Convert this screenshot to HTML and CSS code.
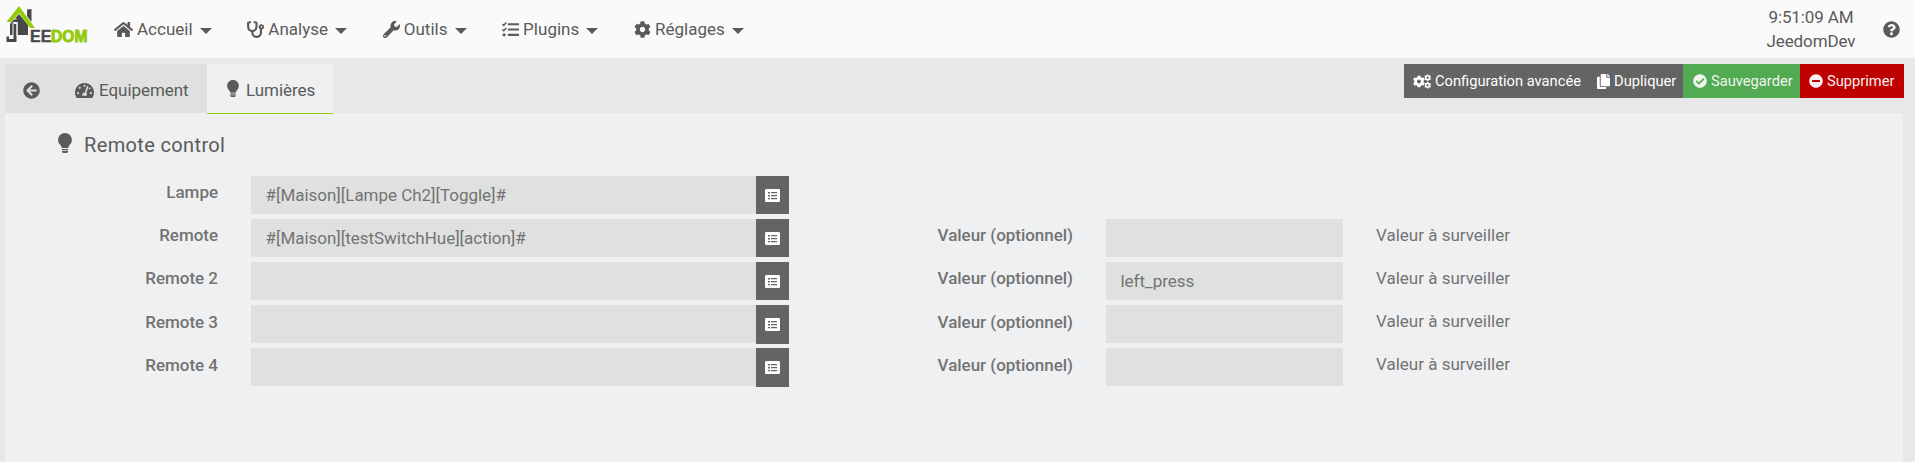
FILE: index.html
```html
<!DOCTYPE html>
<html lang="fr">
<head>
<meta charset="utf-8">
<title>Jeedom - Remote control</title>
<link rel="stylesheet" href="styles.css">
</head>
<body>
<svg class="sprite" aria-hidden="true">
  <symbol id="home" viewBox="0 0 576 512"><path d="M280.37 148.26L96 300.11V464a16 16 0 0 0 16 16l112.06-.29a16 16 0 0 0 15.92-16V368a16 16 0 0 1 16-16h64a16 16 0 0 1 16 16v95.64a16 16 0 0 0 16 16.05L464 480a16 16 0 0 0 16-16V300L295.67 148.26a12.19 12.19 0 0 0-15.3 0zM571.6 251.47L488 182.56V44.05a12 12 0 0 0-12-12h-56a12 12 0 0 0-12 12v72.61L318.47 43a48 48 0 0 0-61 0L4.34 251.47a12 12 0 0 0-1.6 16.9l25.5 31A12 12 0 0 0 45.15 301l235.22-193.74a12.19 12.19 0 0 1 15.3 0L530.9 301a12 12 0 0 0 16.9-1.6l25.5-31a12 12 0 0 0-1.7-16.93z"/></symbol>
  <symbol id="stethoscope" viewBox="0 0 512 512"><g fill="none" stroke="currentColor" stroke-width="64" stroke-linecap="round" stroke-linejoin="round"><path d="M94 36L34 50V176a126 126 0 0 0 252 0V50L226 36"/><path d="M160 304V350a130 130 0 0 0 260 0V200"/></g><circle cx="432" cy="176" r="80"/><circle cx="432" cy="176" r="24" fill="#fafafa"/></symbol>
  <symbol id="wrench" viewBox="0 0 512 512"><path d="M507.73 109.1c-2.24-9.03-13.54-12.09-20.12-5.51l-74.36 74.36-67.88-11.31-11.31-67.88 74.36-74.36c6.62-6.62 3.43-17.9-5.66-20.16-47.38-11.74-99.55.91-136.58 37.93-39.64 39.64-50.55 97.1-34.05 147.2L18.74 402.76c-24.99 24.99-24.99 65.51 0 90.5 24.99 24.99 65.51 24.99 90.5 0l213.21-213.21c50.12 16.71 107.47 5.68 147.37-34.22 37.07-37.07 49.7-89.32 37.91-136.73zM64 472c-13.25 0-24-10.75-24-24 0-13.26 10.75-24 24-24s24 10.74 24 24c0 13.25-10.75 24-24 24z"/></symbol>
  <symbol id="tasks" viewBox="0 0 512 512"><path d="M10 92L52 132L128 48M10 252L52 292L128 208" fill="none" stroke="currentColor" stroke-width="44"/><circle cx="62" cy="416" r="48"/><rect x="176" y="64" width="336" height="64" rx="16"/><rect x="176" y="224" width="336" height="64" rx="16"/><rect x="176" y="384" width="336" height="64" rx="16"/></symbol>
  <symbol id="cog" viewBox="0 0 512 512"><path d="M487.4 315.7l-42.600-24.600c4.300-23.200 4.300-47 0-70.200l42.600-24.600c4.900-2.800 7.100-8.600 5.500-14-11.100-35.600-30-67.800-54.700-94.600-3.800-4.100-10-5.100-14.800-2.300L380.800 110c-17.900-15.400-38.500-27.300-60.800-35.100V25.800c0-5.600-3.900-10.500-9.400-11.700-36.700-8.200-74.300-7.800-109.200 0-5.500 1.200-9.400 6.100-9.400 11.700V75c-22.200 7.900-42.800 19.800-60.800 35.100L88.700 85.500c-4.900-2.800-11-1.900-14.800 2.300-24.700 26.700-43.600 58.900-54.700 94.600-1.700 5.400.6 11.200 5.500 14L67.300 221c-4.300 23.200-4.300 47 0 70.200l-42.600 24.600c-4.900 2.800-7.100 8.600-5.500 14 11.100 35.600 30 67.800 54.700 94.600 3.800 4.100 10 5.100 14.800 2.300l42.600-24.600c17.900 15.400 38.500 27.300 60.800 35.100v49.200c0 5.600 3.900 10.500 9.400 11.700 36.700 8.200 74.300 7.800 109.200 0 5.500-1.200 9.400-6.100 9.400-11.700v-49.200c22.200-7.900 42.800-19.800 60.800-35.100l42.600 24.600c4.900 2.800 11 1.900 14.800-2.300 24.700-26.700 43.600-58.900 54.700-94.600 1.500-5.500-.7-11.300-5.600-14.100zM256 336c-44.100 0-80-35.900-80-80s35.900-80 80-80 80 35.900 80 80-35.900 80-80 80z"/></symbol>
  <symbol id="cogs" viewBox="0 0 640 512"><use href="#cog" x="-8" y="36" width="440" height="440"/><use href="#cog" x="396" y="-4" width="250" height="250"/><use href="#cog" x="396" y="266" width="250" height="250"/></symbol>
  <symbol id="help" viewBox="0 0 512 512"><path d="M504 256c0 136.997-111.043 248-248 248S8 392.997 8 256C8 119.083 119.043 8 256 8s248 111.083 248 248zM262.655 90c-54.497 0-89.255 22.957-116.549 63.758-3.536 5.286-2.353 12.415 2.715 16.258l34.699 26.310c5.205 3.947 12.621 3.008 16.665-2.122 17.864-22.658 30.113-35.797 57.303-35.797 20.429 0 45.698 13.148 45.698 32.958 0 14.976-12.363 22.667-32.534 33.976C247.128 238.528 216 254.941 216 296v4c0 6.627 5.373 12 12 12h56c6.627 0 12-5.373 12-12v-1.333c0-28.462 83.186-29.647 83.186-106.667 0-58.002-60.165-102-116.531-102zM256 338c-25.365 0-46 20.635-46 46 0 25.364 20.635 46 46 46s46-20.636 46-46c0-25.365-20.635-46-46-46z"/></symbol>
  <symbol id="back" viewBox="0 0 512 512"><path d="M256 504C119 504 8 393 8 256S119 8 256 8s248 111 248 248-111 248-248 248zm28.900-143.600L209.400 288H392c13.300 0 24-10.700 24-24v-16c0-13.300-10.700-24-24-24H209.400l75.500-72.400c9.700-9.300 9.900-24.800.4-34.300l-11-10.900c-9.400-9.400-24.600-9.400-33.900 0L107.700 239c-9.400 9.400-9.400 24.600 0 33.900l132.700 132.700c9.400 9.400 24.600 9.400 33.900 0l11-10.900c9.500-9.500 9.300-25-.4-34.300z"/></symbol>
  <symbol id="gauge" viewBox="0 0 576 512"><path d="M288 32C129 32 0 161 0 320c0 53 14 102 39 145 6 10 16 15 27 15H510c11 0 21-5 27-15 25-43 39-92 39-145C576 161 447 32 288 32z"/><g fill="#dfe1e0"><circle cx="288" cy="112" r="32"/><circle cx="144" cy="176" r="32"/><circle cx="96" cy="336" r="32"/><circle cx="480" cy="336" r="32"/><circle cx="445" cy="190" r="28"/><path d="M358 136a23 23 0 0 1 44 15L343 331a64 64 0 0 1 4 85H229a64 64 0 0 1 68-94z"/></g></symbol>
  <symbol id="bulb" viewBox="0 0 352 512"><path d="M176 0C76 0 0 80 0 176c0 44 16 84 44 115 20 24 40 51 48 77v16H260v-16c8-26 28-53 48-77 28-31 44-71 44-115C352 80 276 0 176 0zM96 408H256v34H96zM96 462H256v18l-28 32H124l-28-32z"/></symbol>
  <symbol id="copy" viewBox="0 0 448 512"><path d="M320 448v40c0 13.255-10.745 24-24 24H24c-13.255 0-24-10.745-24-24V120c0-13.255 10.745-24 24-24h72v296c0 30.879 25.121 56 56 56h168zm0-344V0H152c-13.255 0-24 10.745-24 24v368c0 13.255 10.745 24 24 24h272c13.255 0 24-10.745 24-24V128H344c-13.200 0-24-10.800-24-24zm120.971-31.029L375.029 7.029A24 24 0 0 0 358.059 0H352v96h96v-6.059a24 24 0 0 0-7.029-16.970z"/></symbol>
  <symbol id="check" viewBox="0 0 512 512"><path d="M504 256c0 136.967-111.033 248-248 248S8 392.967 8 256 119.033 8 256 8s248 111.033 248 248zM227.314 387.314l184-184c6.248-6.248 6.248-16.379 0-22.627l-22.627-22.627c-6.248-6.249-16.379-6.249-22.628 0L216 308.118l-70.059-70.059c-6.248-6.248-16.379-6.248-22.628 0l-22.627 22.627c-6.248 6.248-6.248 16.379 0 22.627l104 104c6.249 6.249 16.379 6.249 22.628.001z"/></symbol>
  <symbol id="minus" viewBox="0 0 512 512"><path d="M256 8C119 8 8 119 8 256s111 248 248 248 248-111 248-248S393 8 256 8zM124 296c-6.600 0-12-5.400-12-12v-56c0-6.600 5.400-12 12-12h264c6.600 0 12 5.400 12 12v56c0 6.600-5.400 12-12 12H124z"/></symbol>
  <symbol id="list" viewBox="0 0 15 13"><rect width="15" height="13" rx="1.300"/><g fill="#646464"><path d="M3 3h2v1.500H3zM3 6h2v1.500H3zM3 9h2v1.300H3zM6 3h6v1.300H6zM6 6h6v1.300H6zM6 9h6v1.300H6z"/></g></symbol>
</svg>

<header class="navbar">
  <svg class="logo" viewBox="0 0 86 40" role="img" aria-label="Jeedom">
    <path class="logo-dark" d="M22 5.500L26.500 5V18L22 12zM5 20L14 10L23 21V31H12.500V18H9V31H5z"/>
    <path class="logo-dark" d="M8.500 20h3V38H1.500V32.500H4V35H8.500z"/>
    <path class="logo-light" d="M7.500 18.500h1V31h-1zM11.500 18.500h1V32h-1zM8.500 14.500h3v1h-3zM8.500 18h3v1h-3z"/>
    <path class="logo-green" d="M1.500 18L14 2L30 24H25L14 9L6.500 18z"/>
    <text class="logo-text logo-dark" x="25" y="37.700">EE</text>
    <text class="logo-text logo-green logo-heavy" x="46" y="37.700">DOM</text>
  </svg>
  <nav class="menu">
    <a class="menu-item"><svg class="icon wide"><use href="#home"/></svg><span>Accueil</span><i class="caret"></i></a>
    <a class="menu-item"><svg class="icon"><use href="#stethoscope"/></svg><span>Analyse</span><i class="caret"></i></a>
    <a class="menu-item"><svg class="icon"><use href="#wrench"/></svg><span>Outils</span><i class="caret"></i></a>
    <a class="menu-item"><svg class="icon"><use href="#tasks"/></svg><span>Plugins</span><i class="caret"></i></a>
    <a class="menu-item"><svg class="icon"><use href="#cog"/></svg><span>Réglages</span><i class="caret"></i></a>
  </nav>
  <div class="clock"><span>9:51:09 AM</span><span>JeedomDev</span></div>
  <svg class="icon help"><use href="#help"/></svg>
</header>

<main class="page">
  <div class="toolbar">
    <div class="tabs">
      <a class="tab tab-back"><svg class="icon"><use href="#back"/></svg></a>
      <a class="tab tab-device"><svg class="icon wide"><use href="#gauge"/></svg><span>Equipement</span></a>
      <a class="tab tab-active"><svg class="icon bulb"><use href="#bulb"/></svg><span>Lumières</span></a>
    </div>
    <div class="actions">
      <a class="btn btn-config"><svg class="icon cogs"><use href="#cogs"/></svg><span>Configuration avancée</span></a>
      <a class="btn btn-copy"><svg class="icon copy"><use href="#copy"/></svg><span>Dupliquer</span></a>
      <a class="btn btn-save"><svg class="icon"><use href="#check"/></svg><span>Sauvegarder</span></a>
      <a class="btn btn-delete"><svg class="icon"><use href="#minus"/></svg><span>Supprimer</span></a>
    </div>
  </div>
  <section class="panel">
    <h1 class="legend"><svg class="legend-icon"><use href="#bulb"/></svg><span>Remote control</span></h1>
    <form class="form">
      <div class="row">
        <label class="label">Lampe</label>
        <div class="group"><input class="field" value="#[Maison][Lampe Ch2][Toggle]#"><a class="pick"><svg class="list"><use href="#list"/></svg></a></div>
      </div>
      <div class="row">
        <label class="label">Remote</label>
        <div class="group"><input class="field" value="#[Maison][testSwitchHue][action]#"><a class="pick"><svg class="list"><use href="#list"/></svg></a></div>
        <label class="label">Valeur (optionnel)</label><input class="field"><span class="hint">Valeur à surveiller</span>
      </div>
      <div class="row">
        <label class="label">Remote 2</label>
        <div class="group"><input class="field"><a class="pick"><svg class="list"><use href="#list"/></svg></a></div>
        <label class="label">Valeur (optionnel)</label><input class="field" value="left_press"><span class="hint">Valeur à surveiller</span>
      </div>
      <div class="row row-low">
        <label class="label">Remote 3</label>
        <div class="group"><input class="field"><a class="pick"><svg class="list"><use href="#list"/></svg></a></div>
        <label class="label">Valeur (optionnel)</label><input class="field"><span class="hint">Valeur à surveiller</span>
      </div>
      <div class="row row-low">
        <label class="label">Remote 4</label>
        <div class="group"><input class="field"><a class="pick"><svg class="list"><use href="#list"/></svg></a></div>
        <label class="label">Valeur (optionnel)</label><input class="field"><span class="hint">Valeur à surveiller</span>
      </div>
    </form>
  </section>
</main>
</body>
</html>
```

FILE: styles.css
```css
* { box-sizing: border-box; }
body {
  margin: 0;
  height: 462px;
  overflow: hidden;
  display: flex;
  flex-direction: column;
  background: #e8e8ea;
  color: #5a5a5a;
  font: 17px/24px Roboto, sans-serif;
}
.sprite { display: none; }
.icon { width: 17px; height: 17px; flex: none; fill: currentColor; color: inherit; }
.icon.wide { width: 19px; }

.navbar { display: flex; align-items: center; height: 58px; padding: 0 15px 0 5px; background: #fafafa; }
.logo { width: 86px; height: 40px; flex: none; margin-bottom: 10px; }
.logo-dark { fill: #47474b; }
.logo-green { fill: #94cb0b; }
.logo-light { fill: #fafafa; }
.logo-text { font: bold 16px "Liberation Sans", sans-serif; stroke: #47474b; stroke-width: .4px; }
.logo-heavy { font-size: 15.6px; stroke: #94cb0b; stroke-width: .9px; }
.menu { display: flex; flex: 1; gap: 35.6px; margin-left: 23px; }
.menu-item { display: flex; align-items: center; gap: 4px; letter-spacing: .02px; }
.caret { margin-left: 3px; margin-top: 3px; border: 6px solid transparent; border-top-color: currentColor; border-bottom: 0; }
.clock { display: flex; flex-direction: column; align-items: center; width: 90px; margin-right: 27px; letter-spacing: -.1px; }

.page { display: flex; flex-direction: column; flex: 1; padding: 6px 12px 0 5px; }
.toolbar { position: relative; display: flex; justify-content: space-between; height: 49px; margin-right: -1px; }
.tabs { display: flex; height: 50px; }
.tab { display: flex; align-items: center; height: 49px; padding-top: 3px; gap: 5px; background: #dfe1e0; }
.tab-back { width: 53px; padding-left: 18px; }
.tab-device { width: 149px; padding-left: 17px; letter-spacing: -.05px; }
.tab-active { height: 50px; width: 126px; padding-left: 20px; gap: 6px; background: #eff0f2; border-bottom: 1px solid #94cb0b; letter-spacing: -.05px; }
.icon.bulb { width: 12px; margin-bottom: 3px; }
.tab-active .icon { margin-right: 1px; }
.actions { display: flex; height: 34px; color: #fff; font-size: 14.7px; }
.btn { display: flex; align-items: center; gap: 4px; background: #646464; }
.btn .icon { width: 14px; height: 14px; }
.btn .icon.cogs { width: 18px; height: 15px; }
.btn .icon.copy { width: 13px; height: 15px; }
.btn-config { width: 187px; padding-left: 9px; }
.btn-copy { width: 92px; padding-left: 6px; }
.btn-save { width: 117px; padding-left: 10px; background: #52aa52; color: #f0f5f0; }
.btn-delete { width: 104px; padding-left: 9px; background: #bf0000; color: #f8eeee; }

.panel { flex: 1; background: #eff0f2; }
.legend { display: flex; margin: 0; padding: 20px 0 0 53px; height: 63px; gap: 12px; font-size: 20px; font-weight: 400; letter-spacing: .36px; }
.legend-icon { width: 14px; height: 20px; fill: currentColor; }
.form { display: grid; gap: 5px; color: #737373; }
.row { display: grid; grid-template-columns: 213px 538px 251px 237px auto; column-gap: 33px; height: 38px; }
.label { padding-top: 4px; text-align: right; font-weight: 500; letter-spacing: -.03px; }
.row-low .label { padding-top: 5px; }
.hint { padding-top: 4px; }
.group { display: flex; }
.field { width: 100%; min-width: 0; height: 38px; padding: 0 14.5px; border: 0; border-radius: 0; background: #dfe1e0; color: #737373; font: 17px Roboto, sans-serif; letter-spacing: -.03px; }
.pick { display: flex; flex: none; align-items: center; justify-content: center; width: 33px; height: 38px; background: #646464; }
.row-low .pick { height: 39px; }
.list { width: 15px; height: 13px; fill: #fff; }
```
